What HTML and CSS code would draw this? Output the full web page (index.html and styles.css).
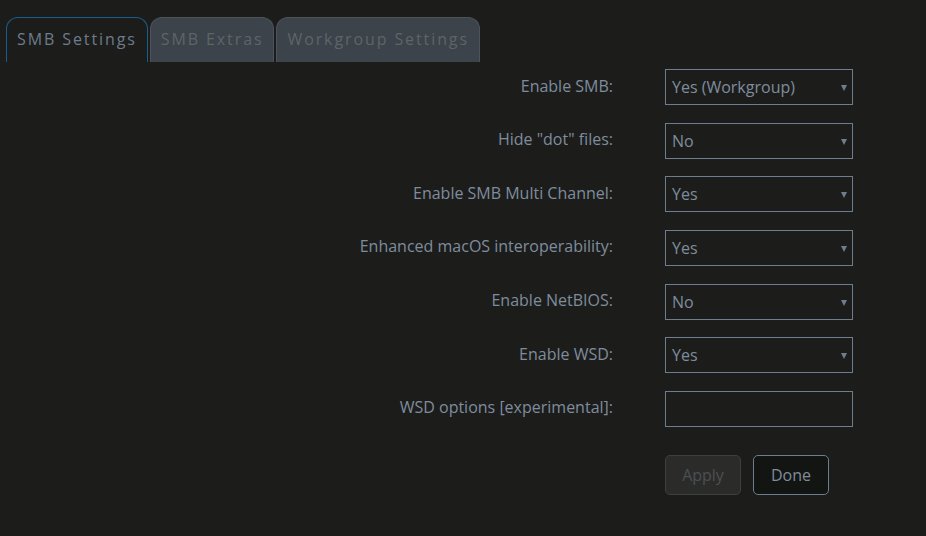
FILE: index.html
```html
<!DOCTYPE html>
<html lang="en">
<head>
    <meta charset="UTF-8">
    <meta name="viewport" content="width=device-width, initial-scale=1.0">
    <title>SMB Settings</title>
    <link rel="stylesheet" href="styles.css">
</head>
<body>
    <div class="tabs">
        <div class="tab active">SMB Settings</div>
        <div class="tab">SMB Extras</div>
        <div class="tab">Workgroup Settings</div>
    </div>

    <form class="settings">
        <label for="smb-enabled">Enable SMB:</label>
        <div class="select-wrap">
            <select id="smb-enabled">
                <option>Yes (Workgroup)</option>
                <option>Yes (Active Directory)</option>
                <option>No</option>
            </select>
        </div>

        <label for="hide-dot">Hide "dot" files:</label>
        <div class="select-wrap">
            <select id="hide-dot">
                <option>No</option>
                <option>Yes</option>
            </select>
        </div>

        <label for="multi-channel">Enable SMB Multi Channel:</label>
        <div class="select-wrap">
            <select id="multi-channel">
                <option>Yes</option>
                <option>No</option>
            </select>
        </div>

        <label for="macos">Enhanced macOS interoperability:</label>
        <div class="select-wrap">
            <select id="macos">
                <option>Yes</option>
                <option>No</option>
            </select>
        </div>

        <label for="netbios">Enable NetBIOS:</label>
        <div class="select-wrap">
            <select id="netbios">
                <option>No</option>
                <option>Yes</option>
            </select>
        </div>

        <label for="wsd">Enable WSD:</label>
        <div class="select-wrap">
            <select id="wsd">
                <option>Yes</option>
                <option>No</option>
            </select>
        </div>

        <label for="wsd-options">WSD options [experimental]:</label>
        <input type="text" id="wsd-options">

        <div class="actions">
            <button type="submit" class="btn" disabled>Apply</button>
            <button type="button" class="btn done">Done</button>
        </div>
    </form>
</body>
</html>
```

FILE: styles.css
```css
body {
    margin: 0;
    padding: 0;
    background: #1c1d1b;
    color: #7f8c9d;
    font-family: "Open Sans", "Noto Sans", sans-serif;
    font-size: 16px;
}

.tabs {
    display: flex;
    gap: 2px;
    padding: 17px 0 0 6px;
}

.tab {
    height: 44px;
    line-height: 43px;
    padding: 0 10px;
    border: 1px solid #4c535b;
    border-bottom: none;
    border-radius: 12px 12px 0 0;
    background: #3d434a;
    color: #5e6569;
    font-size: 16px;
    letter-spacing: 1.9px;
}

.tab.active {
    background: #1c1d1b;
    border-color: #1a5e90;
    color: #6d7b8b;
}

.settings {
    display: grid;
    grid-template-columns: 613px 188px;
    column-gap: 52px;
    row-gap: 17.67px;
    padding-top: 7px;
}

.settings label {
    text-align: right;
    align-self: center;
    margin-top: -3px;
}

.select-wrap {
    position: relative;
}

/* small arrow on the right of each dropdown */
.select-wrap::after {
    content: "";
    position: absolute;
    right: 6px;
    top: 16px;
    border-left: 3px solid transparent;
    border-right: 3px solid transparent;
    border-top: 6px solid #6f7d8e;
    pointer-events: none;
}

.settings select,
.settings input {
    appearance: none;
    width: 188px;
    height: 36px;
    box-sizing: border-box;
    margin: 0;
    padding: 0 0 0 6px;
    border: 1px solid #6c7d90;
    border-radius: 0;
    background: #1c1d1b;
    color: #7f8c9d;
    font-family: inherit;
    font-size: 16px;
}

.actions {
    grid-column: 2;
    display: flex;
    gap: 12px;
    margin-top: 10px;
}

.btn {
    width: 76px;
    height: 40px;
    border: 1px solid #6c7d90;
    border-radius: 5px;
    background: #131512;
    color: #7f8c9d;
    font-family: inherit;
    font-size: 16px;
    cursor: pointer;
}

.btn:disabled {
    background: #2b2c29;
    border-color: #3e403d;
    color: #4b4f53;
    cursor: default;
}
```
